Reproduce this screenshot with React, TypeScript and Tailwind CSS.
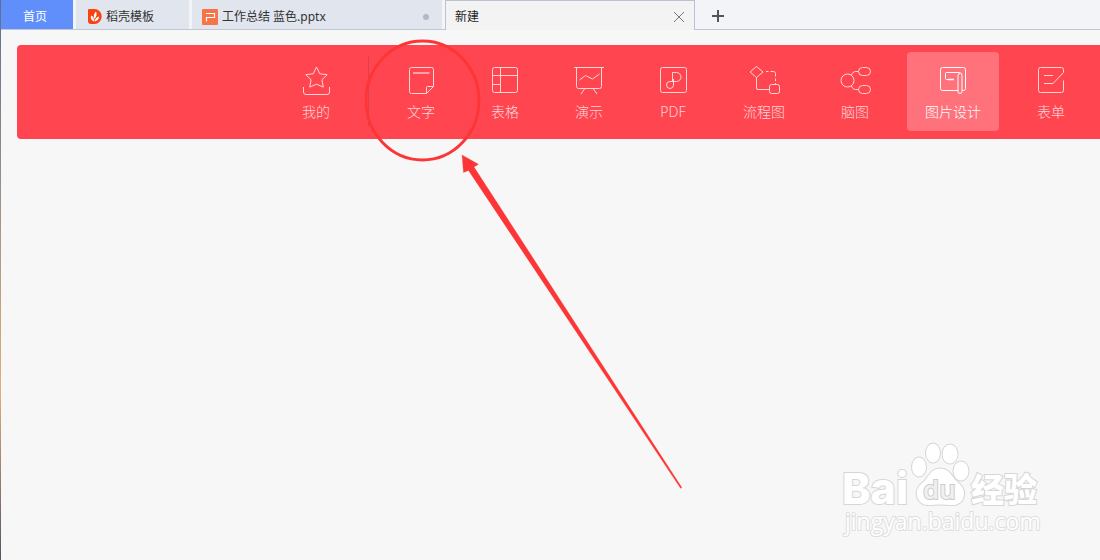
import type { ReactNode } from "react";

function Icon({ children }: { children: ReactNode }) {
  return (
    <svg viewBox="0 0 32 32" className="-mx-0.5 h-8 w-8 shrink-0 fill-none stroke-current stroke-1" aria-hidden="true">
      {children}
    </svg>
  );
}

function NavItem({ label, active, children }: { label: string; active?: boolean; children: ReactNode }) {
  return (
    <button
      type="button"
      className={
        active
          ? "flex h-[79px] shrink-0 flex-col items-center rounded bg-[#ff727b] px-[18px] pt-3 text-white"
          : "flex h-[79px] shrink-0 flex-col items-center rounded px-[18px] pt-3 text-[#ffd5d8]"
      }
    >
      <Icon>{children}</Icon>
      <span className="mt-1.5 whitespace-nowrap text-sm font-light leading-5">{label}</span>
    </button>
  );
}

function TabBar() {
  return (
    <div className="flex h-[30px] bg-[#f2f4f8] text-xs text-[#333] shadow-[inset_0_-1px_0_#c0c6d6]">
      <button type="button" className="mb-px w-[72px] bg-[#608ffc] pr-1 pt-1 text-white">
        首页
      </button>
      <button type="button" className="mb-px ml-[3px] flex w-[113px] items-center bg-[#e1e5ee] pl-3 pt-1">
        <svg viewBox="0 0 14 15" className="mr-1 h-[15px] w-3.5" aria-hidden="true">
          <path d="M1 0h5.500a7.200 7.500 0 0 1 0 15H3a3 3 0 0 1-3-3V1a1 1 0 0 1 1-1Z" fill="#fa4310" />
          <path d="M6.300 12.500C3 11.500 2.500 9 3 6.500 5.200 7.500 6.300 9 6.300 12.500ZM6.300 10C5.300 7 6 4.500 8 2.500 9.400 5 8.500 8 6.300 10ZM6.700 12.500C6.700 10 8.500 8.300 11 7.500 11.200 10 9.500 12 6.700 12.500Z" fill="#fff" />
        </svg>
        稻壳模板
      </button>
      <button type="button" className="mb-px ml-[3px] flex w-[250px] items-center bg-[#e1e5ee] pl-2.5 pr-[13px] pt-1">
        <svg viewBox="0 0 16 16" className="mr-1 h-4 w-4" aria-hidden="true">
          <rect width="16" height="16" rx="1" fill="#f67447" />
          <path d="M4 4.500h8.500v4H4.500v4" fill="none" stroke="#fff" strokeWidth="1.200" />
        </svg>
        工作总结 蓝色.pptx
        <span className="ml-auto h-1.5 w-1.5 rounded-full bg-[#b4b8c3]" />
      </button>
      <div className="ml-[3px] flex w-[250px] items-center justify-between border-x border-t border-[#bac2d3] bg-[#f3f3f3] pl-[9px] pr-2.5">
        <span className="pt-0.5 text-[#222]">新建</span>
        <button type="button" aria-label="关闭" className="pt-0.5">
          <svg viewBox="0 0 10 10" className="h-2.5 w-2.5 fill-none stroke-[#777]" aria-hidden="true">
            <path d="M0 0 10 10M10 0 0 10" />
          </svg>
        </button>
      </div>
      <button type="button" aria-label="新建标签" className="pl-[17px] pt-0.5">
        <svg viewBox="0 0 12 12" className="h-3 w-3 fill-none stroke-[#555] stroke-2" aria-hidden="true">
          <path d="M6 0v12M0 6h12" />
        </svg>
      </button>
    </div>
  );
}

function Nav() {
  return (
    <nav className="ml-4 mt-[15px] flex h-[94px] items-start justify-end gap-5 rounded-l bg-[#ff4650] pr-[17px] pt-[7px]">
      <NavItem label="我的">
        <path d="m16.500 3 3.300 6.800 7.400.9-5.300 5.100 1.400 7.300-6.800-2.900-6.800 2.900 1.400-7.300-5.300-5.100 7.400-.9Z" />
        <path d="M3.500 23v5a2.500 2.500 0 0 0 2.500 2.500h21a2.500 2.500 0 0 0 2.500-2.500v-5" />
      </NavItem>
      <span className="mt-1 h-[71px] w-px shrink-0 bg-[#dc414a]" />
      <NavItem label="文字">
        <path d="M21.500 29.500h-15a2 2 0 0 1-2-2v-22a2 2 0 0 1 2-2h20a2 2 0 0 1 2 2v17ZM21.500 29.500v-6a1 1 0 0 1 1-1h6" />
        <path d="M8 9h16.500" strokeWidth="2" opacity=".65" />
      </NavItem>
      <NavItem label="表格">
        <rect x="3.500" y="3.500" width="25" height="25" rx="2" />
        <path d="M3.500 11.500h25M11.500 3.500v25M3.500 20.500h8" />
      </NavItem>
      <NavItem label="演示">
        <path d="M1 3.500h30M3.500 3.500v19a2 2 0 0 0 2 2h21a2 2 0 0 0 2-2v-19M11.500 25 8 30M20.500 25l3.500 5M6.500 16l6-4.500 7 3.500 7-5" />
      </NavItem>
      <NavItem label="PDF">
        <rect x="3.500" y="3.500" width="26" height="25" rx="2" />
        <path d="M15.500 17.500v-9h4a4.500 4.500 0 0 1 0 9h-6.500a3.500 3.500 0 1 0 3.500 3.500v-6" />
      </NavItem>
      <NavItem label="流程图">
        <path d="m8.500 2.500 6.500 5.500-6.500 5.500L2 8ZM8.500 13.500v10.500a1.500 1.500 0 0 0 1.500 1.500h11.500" />
        <path d="M18 7.500h2.500M22.500 7.500h3a2 2 0 0 1 2 2v3M27.500 14.500v2.500M27.500 19v1.500" />
        <rect x="21.500" y="20.500" width="10" height="9" rx="2" />
      </NavItem>
      <NavItem label="脑图">
        <circle cx="8.500" cy="16.500" r="6.500" />
        <rect x="19.500" y="3.500" width="12" height="8" rx="4" />
        <rect x="19.500" y="21.500" width="12" height="8" rx="4" />
        <path d="M12.500 11.500c0-2 2-4 4-4h3M12.500 21.500c0 2 2 4 4 4h3" />
      </NavItem>
      <NavItem label="图片设计" active>
        <path d="M21 26.500H5.500a2 2 0 0 1-2-2v-19a2 2 0 0 1 2-2h21a2 2 0 0 1 2 2v19a2 2 0 0 1-2 2H25" />
        <path d="M16.500 15.500h-7a1 1 0 0 1-1-1V9.500a1 1 0 0 1 1-1H22a3 3 0 0 1 3 3v16a2 2 0 0 1-4 0v-16a2 2 0 0 1 2-2" />
        <path d="M11 15.500h6" strokeWidth="2" opacity=".5" />
      </NavItem>
      <NavItem label="表单">
        <path d="M28.500 6V5.500a2 2 0 0 0-2-2h-21a2 2 0 0 0-2 2v21a2 2 0 0 0 2 2h21a2 2 0 0 0 2-2v-10M28.500 6v2.500L18 19.500H9M9 11.500h9" />
      </NavItem>
    </nav>
  );
}

function Annotation() {
  return (
    <svg viewBox="0 0 320 460" className="pointer-events-none absolute left-[365px] top-[38px] h-[460px] w-80" aria-hidden="true">
      <ellipse cx="57.500" cy="62.500" rx="56.500" ry="59.500" fill="none" stroke="#fc3636" strokeWidth="3" />
      <path d="m97 117 16.500 9.300-4.500 2.700L316.800 449.500 315.600 450.300 103.500 132.500 98.500 134.500Z" fill="#fc3636" stroke="#fc3636" strokeWidth=".3" />
    </svg>
  );
}

function Watermark() {
  return (
    <svg
      viewBox="0 0 210 100"
      className="pointer-events-none absolute left-[838px] top-[440px] h-[100px] w-[210px] fill-white stroke-[#d6d6d6] stroke-2 font-['Open_Sans','Noto_Sans_CJK_SC',sans-serif] [paint-order:stroke]"
      aria-hidden="true"
    >
      <text x="4" y="64" fontSize="43" fontWeight="800" fontFamily="Inter, sans-serif">Bai</text>
      <ellipse cx="81" cy="27" rx="7" ry="9.500" />
      <ellipse cx="95" cy="13" rx="7" ry="9.500" />
      <ellipse cx="112" cy="14" rx="7.500" ry="9.500" />
      <ellipse cx="123" cy="31" rx="7.500" ry="9.500" />
      <path d="M102 28.500c-10 0-11 9-17 14-7 5-8 12-4 18 5 7 13 4 21 4s17 3 22-4c4-7 2-13-4-18-6-5-8-14-18-14Z" />
      <text x="85" y="59" fontSize="26" fontWeight="600" fill="#f0f0f0" stroke="#cccccc">du</text>
      <text x="133" y="62" fontSize="33" fontWeight="900">经验</text>
      <text x="7" y="90" fontSize="23" stroke="#dedede">jingyan.baidu.com</text>
    </svg>
  );
}

export default function App() {
  return (
    <div className="relative flex min-h-screen overflow-hidden bg-[#f7f7f7] font-['Noto_Sans','Noto_Sans_CJK_SC',sans-serif]">
      <div className="w-px shrink-0 bg-linear-to-b from-[#5c6f94] via-[#e0b070] via-70% to-[#5a5068]" />
      <main className="min-w-0 flex-1">
        <TabBar />
        <Nav />
      </main>
      <Annotation />
      <Watermark />
    </div>
  );
}
